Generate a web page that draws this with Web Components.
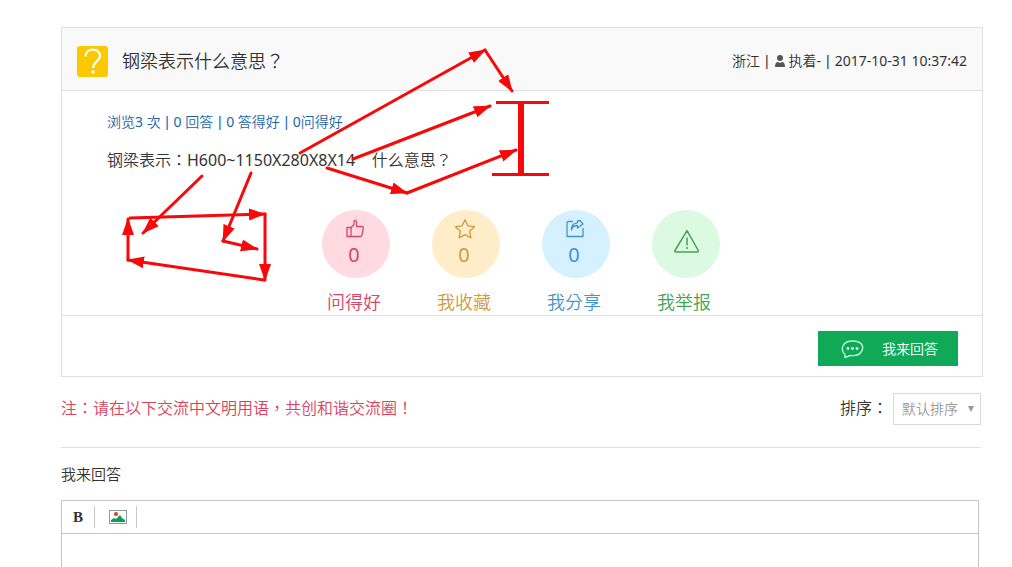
<!DOCTYPE html>
<html lang="zh-CN">
<head>
<meta charset="utf-8">
<meta name="viewport" content="width=device-width, initial-scale=1">
<title>钢梁表示什么意思？</title>
<style>
  /* The TW locale centres full-width punctuation in its cell. */
  body { margin: 0; background: #fff; color: #333; font: 14px/20px "Noto Sans", "Noto Sans CJK TC DemiLight", "Noto Sans CJK TC Light", "Noto Sans CJK TC", sans-serif; -webkit-locale: "zh-TW"; }
  .bar { padding: 0 1px; font-family: "Liberation Sans", sans-serif; }
</style>
</head>
<body>
<qa-page>
  <question-card>
    <span slot="title">钢梁表示什么意思？</span>
    <question-meta slot="meta" place="浙江" user="执着-" time="2017-10-31 10:37:42"></question-meta>
    <span slot="stats">浏览3 次 <span class="bar">|</span> 0 回答 <span class="bar">|</span> 0 答得好 <span class="bar">|</span> 0问得好</span>
    <span slot="content">钢梁表示：H600~1150X280X8X14&nbsp;&nbsp;&nbsp; 什么意思？</span>
    <round-action slot="actions" label="问得好" count="0" style="--ink:#d6456b;--fill:#ffdae0">
      <svg width="20" height="20" viewBox="0 0 20 20"><path d="M2 8.500h4v9H2zM6 8.500l3-3V2.500c0-1.500 2.500-1.500 2.500.8V7.500H17c1.200 0 1.500.8 1.300 1.800l-1.300 6.500c-.3 1.200-.8 1.700-2 1.700H6"/></svg>
    </round-action>
    <round-action slot="actions" label="我收藏" count="0" style="--ink:#cf9a3a;--fill:#ffedc9">
      <svg width="20" height="20" viewBox="0 0 20 20"><path d="M10 .8l2.900 6 6.500.9-4.700 4.600 1.200 6.500-5.900-3.100-5.900 3.100 1.200-6.500L.6 7.700l6.500-.9z"/></svg>
    </round-action>
    <round-action slot="actions" label="我分享" count="0" style="--ink:#3f96cc;--fill:#d5f0ff">
      <svg width="20" height="20" viewBox="0 0 20 20"><path d="M8 2.500H3.500c-1 0-1.500.5-1.500 1.500v13.500h16V9M6.500 11c.5-3.500 2.500-4.500 6-4.500V9l5.500-4-3-3.500-2.500.5v1.800C8 4 6.300 7 6.500 11z"/></svg>
    </round-action>
    <round-action slot="actions" label="我举报" style="--ink:#43a256;--fill:#dcf9e2">
      <svg width="28" height="26" viewBox="-2 2 28 26"><path d="M14 2.700L25.300 22.500c.5 1 0 1.500-1 1.500H3c-1 0-1.500-.5-1-1.500zM14 9.500v8M14 19v2" stroke-width="1.500"/></svg>
    </round-action>
    <answer-button slot="footer">我来回答</answer-button>
    <arrow-notes slot="notes"></arrow-notes>
  </question-card>
  <notice-bar>注：请在以下交流中文明用语，共创和谐交流圈！</notice-bar>
  <answer-editor>我来回答</answer-editor>
</qa-page>

<script>
const define = (name, markup, setup) => {
  const template = document.createElement('template');
  template.innerHTML = markup;
  customElements.define(name, class extends HTMLElement {
    constructor() {
      super();
      this.attachShadow({ mode: 'open' }).append(template.content.cloneNode(true));
    }
    connectedCallback() { if (setup) setup(this, this.shadowRoot); }
  });
};

define('qa-page', `
<style>
  :host { display: flex; flex-direction: column; box-sizing: border-box; min-height: 100vh; padding: 27px 29px 0 61px; }
</style>
<slot></slot>`);

define('question-card', `
<style>
  :host { display: block; position: relative; border: 1px solid #e0e0e0; }
  header { display: flex; align-items: center; gap: 13px; padding: 4px 15px 0; height: 58px; background: #f9f9f9; border-bottom: 1px solid #e0e0e0; }
  header svg { flex: none; margin-top: 2px; }
  h1 { flex: 1; margin: 0; font-size: 18px; line-height: 24px; font-weight: inherit; }
  .body { padding: 20px 45px 0; }
  .stats { margin: 0; color: #1c63a8; line-height: 22px; }
  .content { margin: 16px 0 0; font-size: 16px; line-height: 22px; }
  .actions { display: flex; justify-content: center; margin-top: 39px; padding: 0 2px 1px 0; }
  footer { display: flex; justify-content: flex-end; padding: 15px 24px 10px; border-top: 1px solid #e0e0e0; }
</style>
<header>
  <svg width="32" height="32" viewBox="0 0 32 32" aria-hidden="true">
    <rect width="31" height="31" rx="3" fill="#fcc800"/>
    <path d="M8.500 10.500C8.500 1.500 23 1.500 23 10c0 5-7 6-7 12" fill="none" stroke="#fff" stroke-width="2.200"/>
    <circle cx="16" cy="26" r="1.800" fill="#fff"/>
  </svg>
  <h1><slot name="title"></slot></h1>
  <slot name="meta"></slot>
</header>
<div class="body">
  <p class="stats"><slot name="stats"></slot></p>
  <p class="content"><slot name="content"></slot></p>
  <div class="actions"><slot name="actions"></slot></div>
</div>
<footer><slot name="footer"></slot></footer>
<slot name="notes"></slot>`);

define('question-meta', `
<style>
  :host { display: flex; align-items: center; gap: 4px; white-space: nowrap; }
  a { display: flex; align-items: center; gap: 3px; color: inherit; text-decoration: none; }
  .bar { padding: 0 1px; font-family: "Liberation Sans", sans-serif; }
</style>
<span class="place"></span><span class="bar">|</span>
<a href="#user"><svg width="12" height="14" viewBox="0 0 12 14" fill="#555" aria-hidden="true"><circle cx="6" cy="4" r="3"/><path d="M1 13c0-3 1-5 3-5l2 1 2-1c2 0 3 2 3 5z"/></svg><span class="user"></span></a>
<span class="bar">|</span><time></time>`, (host, root) => {
  root.querySelector('.place').textContent = host.getAttribute('place');
  root.querySelector('.user').textContent = host.getAttribute('user');
  root.querySelector('time').textContent = host.getAttribute('time');
});

define('round-action', `
<style>
  :host { display: block; width: 110px; color: var(--ink); }
  button { display: flex; flex-direction: column; align-items: center; gap: 12px; width: 100%; padding: 0; border: 0; background: none; color: inherit; font: inherit; cursor: pointer; }
  .disc { display: flex; flex-direction: column; align-items: center; justify-content: center; gap: 4px; box-sizing: border-box; width: 68px; height: 68px; padding: 0 2px 2px 0; border-radius: 50%; background: var(--fill); }
  .count { padding-right: 2px; font-size: 20px; line-height: 24px; }
  .count:empty { display: none; }
  .label { padding-right: 4px; font-size: 18px; line-height: 24px; }
  ::slotted(svg) { fill: none; stroke: var(--ink); stroke-width: 1.300; stroke-linejoin: round; }
</style>
<button type="button"><span class="disc"><slot></slot><span class="count"></span></span><span class="label"></span></button>`, (host, root) => {
  root.querySelector('.count').textContent = host.getAttribute('count') || '';
  root.querySelector('.label').textContent = host.getAttribute('label');
});

define('answer-button', `
<style>
  :host { display: block; }
  button { display: flex; align-items: center; gap: 18px; height: 35px; padding: 0 20px 0 23px; border: 0; background: #0fa958; color: #fff; font: inherit; cursor: pointer; }
</style>
<button type="button">
  <svg width="23" height="20" viewBox="0 0 23 20" aria-hidden="true"><path d="M4 15.500C-1 11 1 2 11.500 2S22 8 21.500 10c-1 5-6 7-12 6.500L4 18.500z" fill="none" stroke="#b9f5d3" stroke-width="1.400" stroke-linejoin="round"/><g fill="#d9ffe9"><circle cx="7" cy="9.500" r="1.400"/><circle cx="11.500" cy="9.500" r="1.400"/><circle cx="16" cy="9.500" r="1.400"/></g></svg>
  <slot></slot>
</button>`);

define('arrow-notes', `
<style>
  :host { position: absolute; left: -1px; top: -1px; pointer-events: none; }
  svg { display: block; }
</style>
<svg width="500" height="270" viewBox="61 27 500 270" fill="none" stroke="#f80808" stroke-width="3" stroke-linecap="round" aria-hidden="true">
  <defs>
    <marker id="tip" markerUnits="userSpaceOnUse" markerWidth="18" markerHeight="14" refX="16" refY="7" orient="auto"><path d="M0 1L17 7L0 13Z" fill="#f80808" stroke="none"/></marker>
  </defs>
  <g marker-end="url(#tip)">
    <path d="M300 153L485 50"/><path d="M485 50L512 91"/>
    <path d="M353 159L490 106"/>
    <path d="M327 168L407 193"/><path d="M407 193L516 150"/>
    <path d="M202 176L143 233"/>
    <path d="M251 173L223 241"/><path d="M223 241L257 249"/>
    <path d="M130 218L265 214"/><path d="M265 214L265 280"/>
    <path d="M264 280L128 260"/><path d="M128 260L128 219"/>
  </g>
  <g stroke-linecap="butt"><path d="M496 102.500H549M492 174.500H549"/><path d="M521 102V174" stroke-width="6"/></g>
</svg>`);

define('notice-bar', `
<style>
  :host { display: flex; align-items: center; justify-content: space-between; margin-right: 2px; padding: 16px 0 22px; border-bottom: 1px solid #e0e0e0; font-size: 16px; line-height: 24px; }
  .note { color: #d9435e; padding-bottom: 2px; }
  .sort { display: flex; align-items: center; gap: 5px; }
  label { padding-bottom: 2px; }
  .box { position: relative; display: flex; }
  select { appearance: none; width: 88px; height: 32px; margin: 0; padding: 0 0 0 8px; border: 1px solid #d9d9d9; border-radius: 0; background: #fff; color: #999; font: inherit; font-size: 14px; }
  .box::after { content: ""; position: absolute; right: 7px; top: 13px; border: 3px solid transparent; border-top: 6px solid #999; border-bottom: 0; pointer-events: none; }
</style>
<span class="note"><slot></slot></span>
<div class="sort"><label for="order">排序：</label><span class="box"><select id="order"><option>默认排序</option></select></span></div>`);

define('answer-editor', `
<style>
  :host { display: flex; flex-direction: column; flex: 1; margin-right: 4px; }
  label { padding: 15px 0; font-size: 15px; line-height: 22px; }
  .frame { display: flex; flex-direction: column; flex: 1; border: 1px solid #c8c8c8; border-bottom: 0; }
  .tools { display: flex; align-items: center; height: 32px; border-bottom: 1px solid #c8c8c8; }
  button { display: flex; align-items: center; justify-content: center; height: 22px; padding: 0; border: 0; border-right: 1px solid #c8c8c8; background: none; cursor: pointer; }
  .bold { width: 33px; color: #333; font: bold 15px/22px "Liberation Serif", serif; }
  .image { width: 42px; padding-left: 5px; }
  textarea { flex: 1; min-height: 32px; padding: 8px; border: 0; outline: 0; resize: none; font: inherit; }
</style>
<label for="answer"><slot></slot></label>
<div class="frame">
  <div class="tools">
    <button class="bold" type="button" title="加粗">B</button>
    <button class="image" type="button" title="图片" aria-label="图片"><svg width="18" height="14" viewBox="0 0 18 14"><rect x=".5" y=".5" width="17" height="13" fill="#fff" stroke="#8c9c98"/><circle cx="7" cy="4" r="2" fill="#e23b22"/><path d="M2 12V10l3-2 2 1 4-4 2 3 3 2v2z" fill="#0f9d58"/></svg></button>
  </div>
  <textarea id="answer"></textarea>
</div>`);
</script>
</body>
</html>
